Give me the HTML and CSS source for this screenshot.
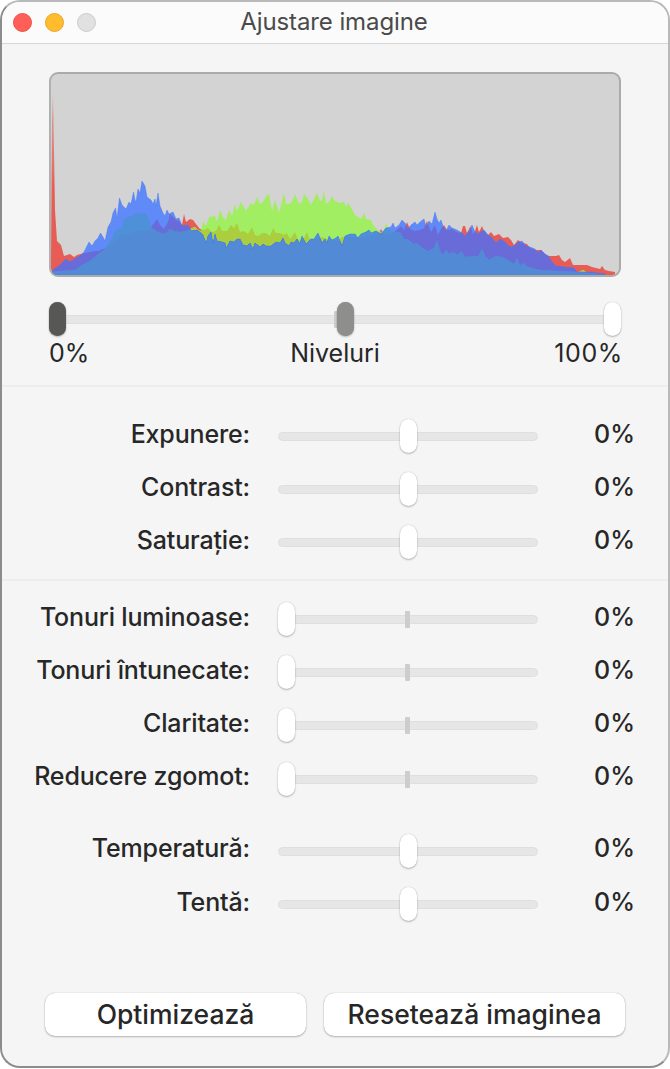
FILE: index.html
```
<!DOCTYPE html>
<html lang="ro">

<head>
    <meta charset="UTF-8">
    <meta name="viewport" content="width=device-width, initial-scale=1.0">
    <title>Ajustare imagine</title>
    <link rel="stylesheet" href="styles.css">
</head>

<body>
    <div class="window">
        <div class="titlebar">
            <div class="lights">
                <span class="light red"></span>
                <span class="light yellow"></span>
                <span class="light off"></span>
            </div>
            <div class="title">Ajustare imagine</div>
        </div>

        <div class="levels">
            <div class="histogram">
                <svg width="568" height="201" viewBox="51 74 568 201">
                    <defs>
                        <linearGradient id="fade" gradientUnits="userSpaceOnUse" x1="0" y1="93" x2="0" y2="190">
                            <stop offset="0" stop-color="#e85c56" stop-opacity="0.35"/>
                            <stop offset="1" stop-color="#e85c56"/>
                        </linearGradient>
                        <path id="r" d="M51 275V262L52 120 53 93 54 150 55 210 57 241 61 245 64 256 70 254 74 257 77 255 84 253 90 252 95 251 99 251 102 249 104 249 110 245 120 236 135 232 150 230 151 227 155 222 157 219 160 225 164 229 168 222 170 214 173 217 176 220 179 221 182 225 184 214 186 222 190 219 193 220 196 224 200 229 205 230 208 228 212 232 216 231 219 225 222 231 227 231 231 225 234 228 237 223 240 232 244 231 248 234 252 227 255 235 258 236 262 233 266 233 270 236 273 228 276 233 280 233 284 235 287 233 290 239 295 232 298 240 304 238 307 232 309 238 315 240 322 237 330 240 338 241 342 237 350 237 360 238 370 236 378 234 381 229 385 236 392 234 397 230 401 226 404 230 407 222 410 229 415 231 420 230 424 228 427 221 431 232 435 225 438 235 441 229 444 225 447 230 452 229 457 232 461 233 463 226 465 226 467 233 470.500 226 473 234 475 231 477 225 479 232 482 226 484 231 488 235 491 232 494 236 499 234 503 238 508 237 511 240 514 245 518 240 522 243 527 244 530 248 535 250 541 250 545 254 549 256 556 256 559 255 562 260 565 262 570 258 573 265 580 265 587 265 592 267 600 269 602 266 605 270 609 271 615 272V275Z"/>
                        <path id="g" d="M51 275V272L60 271 75 270 82 265 90 261 97 255 104 250 108 244 112 238 116 229 118 230 122 227 124 219 128 217 132 216 135 213 140 214 146 213 149 220 152 228 158 232 165 234 170 229 174 231 180 232 186 231 192 228 195 227 198 230 201 231 203 221 206 226 209 217 215 216 217 222 220 210 223 217 226 220 229 210 232 216 235 204 237 211 241 202 246 211 251 203 254 205 257 197 260 204 263 202 267 195 269 194 272 211 275 200 279 213 284 193 286 204 289 204 292 202 295 194 299 204 302 202 304 194 308 199 311 205 317 193 320 201 322 200 324 191 326 204 329 202 332 196 335 201 340 203 344 202 346 207 348 203 352 209 355 215 361 219 364 213 366 219 371 220 373 225 379 231 383 233 386 223 388 228 392 232 400 232 404 239 408 239 413 244 417 243 422 248 428 251 434 248 437 240 440 251 443 255 446 250 449 254 453 252 458 255 461 251 465 257 475 256 478 257 482 249 485 256 489 260 496 256 502 257 508 260 514 264 517 258 520 266 523 263 528 267 540 270 560 271 579 272 583 270 588 273 602 274 605 275V275Z"/>
                        <path id="b" d="M51 275L53 270 60 265 66 259 70 262 76 258 80 256 84 252 86 248 89 242 92 246 95 241 98 238 100.500 233 103 237 105 241 108 227 111 222 113 213 115.500 208 117 218 118 210 119.500 198 122 205 126 209 129 202 131 204 133.500 192 135 200 136 202 138 189 140 193 142 181 145 186 147 197 151 200 153 204 155 199 156 206 158 193 160 206 163 213 165 216 167 210 169 214 173 212 176 219 179 218 182 226 185 225 189 226 191 231 197 230 201 233 203 235 206 243 208 236 211 232 213 244 215 234 217 241 222 242 225 243 226.500 248 230 241 234 242 237 239 240 239 243 245 247 246 250 243 253 249 255 243 260 247 263 244 266 246 271 246 276 242 280 243 283 238 285 243 289 246 291 242 294 243 297 239 300 244 302 236 306 244 311 239 314 239 318 233 322 243 325 239 327 243 329 236 332 240 336 238 338 236 342 246 345 236 350 234 355 234 358 238 361 234 366 232 369 230 371 233 376 231 381 234 386 228 391 227 393 223 395 228 399 225 402 220 405 223 408 229 411 225 415 222 417 225 420 222 424 219 426 227 429 221 432 224 435 212 437 219 439 223 441 220 443 226 446 231 449 225 452 228 457 230 462 233 465 236 470 230 472 225 475 232 478 234 481 232 484 230 488 235 492 238 496 243 500 239 505 242 510 247 514 246 517 243 522 241 526 246 530 247 535 249 538 253 541 250 545 254 549 257 552 262 556 266 565 267 574 268 577 272 590 272 605 274V275Z"/>
                        <clipPath id="in-red"><use href="#r"/></clipPath>
                        <clipPath id="in-green"><use href="#g"/></clipPath>
                    </defs>
                    <!-- single channels, then their overlaps -->
                    <use href="#r" class="ch-r"/>
                    <use href="#g" class="ch-g"/>
                    <use href="#g" class="ch-rg" clip-path="url(#in-red)"/>
                    <use href="#b" class="ch-b"/>
                    <use href="#b" class="ch-rb" clip-path="url(#in-red)"/>
                    <use href="#b" class="ch-gb" clip-path="url(#in-green)"/>
                    <g clip-path="url(#in-green)">
                        <use href="#b" class="ch-rgb" clip-path="url(#in-red)"/>
                    </g>
                    <use href="#b" class="line-b"/>
                </svg>
            </div>
            <div class="slider wide">
                <span class="tick"></span>
                <span class="thumb low dark"></span>
                <span class="thumb mid grey"></span>
                <span class="thumb high"></span>
            </div>
            <div class="captions">
                <span class="cap-min">0%</span>
                <span class="cap-name">Niveluri</span>
                <span class="cap-max">100%</span>
            </div>
        </div>

        <div class="group tone">
            <div class="row">
                <span class="label">Expunere:</span>
                <div class="slider"><span class="thumb mid"></span></div>
                <span class="value">0%</span>
            </div>
            <div class="row">
                <span class="label">Contrast:</span>
                <div class="slider"><span class="thumb mid"></span></div>
                <span class="value">0%</span>
            </div>
            <div class="row">
                <span class="label">Saturație:</span>
                <div class="slider"><span class="thumb mid"></span></div>
                <span class="value">0%</span>
            </div>
        </div>

        <div class="group detail">
            <div class="row">
                <span class="label">Tonuri luminoase:</span>
                <div class="slider"><span class="tick"></span><span class="thumb low"></span></div>
                <span class="value">0%</span>
            </div>
            <div class="row">
                <span class="label">Tonuri întunecate:</span>
                <div class="slider"><span class="tick"></span><span class="thumb low"></span></div>
                <span class="value">0%</span>
            </div>
            <div class="row">
                <span class="label">Claritate:</span>
                <div class="slider"><span class="tick"></span><span class="thumb low"></span></div>
                <span class="value">0%</span>
            </div>
            <div class="row">
                <span class="label">Reducere zgomot:</span>
                <div class="slider"><span class="tick"></span><span class="thumb low"></span></div>
                <span class="value">0%</span>
            </div>
        </div>

        <div class="group color">
            <div class="row">
                <span class="label">Temperatură:</span>
                <div class="slider"><span class="thumb mid"></span></div>
                <span class="value">0%</span>
            </div>
            <div class="row">
                <span class="label">Tentă:</span>
                <div class="slider"><span class="thumb mid"></span></div>
                <span class="value">0%</span>
            </div>
        </div>

        <div class="buttons">
            <button class="btn optimize">Optimizează</button>
            <button class="btn reset">Resetează imaginea</button>
        </div>
    </div>
</body>

</html>
```
FILE: styles.css
```
* {
    box-sizing: border-box;
}

body {
    margin: 0;
    background-color: #fff;
    font-family: Inter, "Liberation Sans", sans-serif;
    font-size: 25px;
    color: #272727;
}

.window {
    display: flex;
    flex-direction: column;
    width: 670px;
    height: 1068px;
    border: 2px solid #b9b9b9;
    border-left-color: #8c8c8c;
    border-bottom-color: #8c8c8c;
    border-radius: 20px;
    background-color: #f5f5f5;
    overflow: hidden;
}

.titlebar {
    display: grid;
    grid-template-columns: 100px 1fr 102px;
    align-items: center;
    height: 42px;
    padding-bottom: 1px;
    border-bottom: 1px solid #d6d6d6;
    background-color: #fbfbfb;
}

.lights {
    display: flex;
    gap: 13px;
    padding-left: 11px;
}

.light {
    width: 19px;
    height: 19px;
    border-radius: 50%;
}

.red {
    background-color: #ff5f57;
    border: 1px solid #ea5048;
}

.yellow {
    background-color: #febc2e;
    border: 1px solid #e5a626;
}

.off {
    background-color: #e1e1e1;
    border: 1px solid #cbcbcb;
}

.title {
    padding-bottom: 2px;
    text-align: center;
    font-size: 24px;
    letter-spacing: -0.1px;
    color: #4a4a4a;
    white-space: nowrap;
}

.levels {
    height: 343px;
    padding: 28px 47px 0;
    border-bottom: 2px solid #ededed;
}

.histogram {
    width: 572px;
    height: 205px;
    border: 2px solid #ababab;
    border-left-color: #b0b0b0;
    border-radius: 9px;
    background-color: #d3d3d3;
    overflow: hidden;
}

.histogram svg {
    display: block;
}

.ch-r { fill: url(#fade) #e85c56; }
.ch-g { fill: #a2ee62; }
.ch-b { fill: #5f8af8; }
.ch-rg { fill: #abce3f; }
.ch-rb { fill: #696cd8; }
.ch-gb { fill: #4e91d8; }
.ch-rgb { fill: #528ad6; }

.line-b {
    fill: none;
    stroke: #3f76ee;
    stroke-opacity: 0.4;
}

.slider {
    position: relative;
    width: 260px;
    height: 9px;
    border: 1px solid #dfdfdf;
    border-radius: 5px;
    background-color: #e6e6e6;
}

.thumb {
    position: absolute;
    top: -14px;
    width: 17px;
    height: 34px;
    border-radius: 9px;
    background-color: #fff;
    box-shadow: 0 0 1px rgba(0, 0, 0, 0.25), 0 1px 2px rgba(0, 0, 0, 0.25);
}

.low {
    left: -1px;
}

.mid {
    left: 121px;
}

.high {
    right: -1px;
}

.tick {
    position: absolute;
    top: -5px;
    left: 126px;
    width: 5px;
    height: 17px;
    border-radius: 1px;
    background-color: #cdcdcd;
}

.wide {
    width: 572px;
    margin-top: 38px;
}

.wide .mid {
    left: 287px;
}

.wide .tick {
    left: 284px;
}

.dark {
    background-color: #575755;
}

.grey {
    background-color: #8e8e8c;
}

.captions {
    display: grid;
    grid-template-columns: 1fr auto 1fr;
    margin-top: 13px;
    line-height: 32px;
}

.cap-max {
    margin-right: -2px;
    text-align: right;
    letter-spacing: 0.6px;
}

.group {
    display: grid;
    grid-auto-rows: 53.2px;
}

.tone {
    height: 194px;
    padding-top: 23px;
    border-bottom: 2px solid #ededed;
}

.detail {
    padding-top: 12px;
}

.color {
    padding-top: 19px;
}

.row {
    display: grid;
    grid-template-columns: 248px 260px 69px;
    column-gap: 28px;
    align-items: center;
    white-space: nowrap;
}

.label,
.value {
    padding-bottom: 6px;
    text-align: right;
    font-weight: 500;
}

.label {
    letter-spacing: -0.15px;
}

.buttons {
    display: flex;
    gap: 18px;
    margin-top: 62px;
    padding-left: 43px;
}

.btn {
    height: 43px;
    padding: 0 0 2px;
    border: none;
    border-radius: 10px;
    background-color: #fff;
    box-shadow: 0 0 1px rgba(0, 0, 0, 0.3), 0 1px 2px rgba(0, 0, 0, 0.25);
    font-family: inherit;
    font-size: 26.5px;
    font-weight: 500;
    color: #272727;
}

.optimize {
    width: 261px;
}

.reset {
    width: 301px;
}
```
